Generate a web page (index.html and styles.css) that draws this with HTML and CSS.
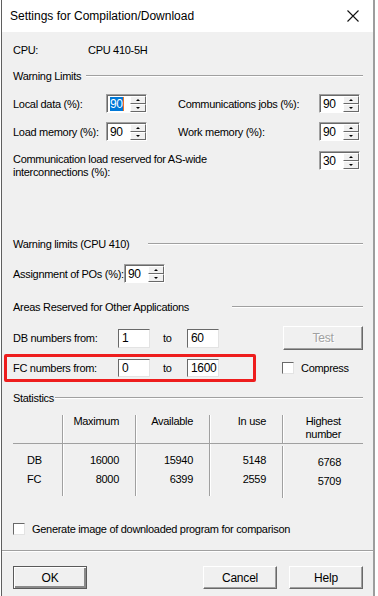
FILE: index.html
```html
<!DOCTYPE html>
<html lang="en">
<head>
  <meta charset="UTF-8" />
  <title>Settings for Compilation/Download</title>
  <link rel="stylesheet" href="styles.css">
</head>
<body>
  <div class="window">
    <div class="titlebar">
      <span class="title">Settings for Compilation/Download</span>
      <svg class="close" width="12" height="12" viewBox="0 0 12 12">
        <path d="M0.5 0.5 L11.5 11.5 M11.5 0.5 L0.5 11.5" stroke="#111" stroke-width="1.1" fill="none" />
      </svg>
    </div>

    <div class="content">
      <div class="cpu-row">
        <span class="cpu-label">CPU:</span>
        <span>CPU 410-5H</span>
      </div>

      <div class="group-title t-warning"><span>Warning Limits</span><i></i></div>

      <div class="row row-1">
        <span class="label">Local data (%):</span>
        <span class="spin"><span class="field"><span class="selected">90</span><b class="caret"></b></span><span class="arrows"><i class="up"></i><i class="down"></i></span></span>
        <span class="label label-right">Communications jobs (%):</span>
        <span class="spin"><span class="field">90</span><span class="arrows"><i class="up"></i><i class="down"></i></span></span>
      </div>

      <div class="row row-2">
        <span class="label">Load memory (%):</span>
        <span class="spin"><span class="field">90</span><span class="arrows"><i class="up"></i><i class="down"></i></span></span>
        <span class="label label-right">Work memory (%):</span>
        <span class="spin"><span class="field">90</span><span class="arrows"><i class="up"></i><i class="down"></i></span></span>
      </div>

      <div class="row row-3">
        <span class="label label-long">Communication load reserved for AS-wide<br />interconnections (%):</span>
        <span class="spin"><span class="field">30</span><span class="arrows"><i class="up"></i><i class="down"></i></span></span>
      </div>

      <div class="group-title t-cpu"><span>Warning limits (CPU 410)</span><i></i></div>

      <div class="row row-po">
        <span class="label label-po">Assignment of POs (%):</span>
        <span class="spin"><span class="field">90</span><span class="arrows"><i class="up"></i><i class="down"></i></span></span>
      </div>

      <div class="group-title t-areas"><span>Areas Reserved for Other Applications</span><i></i></div>

      <div class="range-row db-row">
        <span class="label label-range">DB numbers from:</span>
        <span class="box">1</span>
        <span class="to">to</span>
        <span class="box">60</span>
        <button class="btn btn-test" disabled>Test</button>
      </div>

      <div class="fc-line">
        <div class="range-row fc-row">
          <span class="label label-range">FC numbers from:</span>
          <span class="box box-fc">0</span>
          <span class="to">to</span>
          <span class="box box-fc">1600</span>
        </div>
        <label class="check check-compress"><span class="checkbox"></span>Compress</label>
      </div>

      <div class="group-title t-stats"><span>Statistics</span><i></i></div>

      <div class="stats">
        <div class="cell head"></div>
        <div class="cell head num sep">Maximum</div>
        <div class="cell head num sep">Available</div>
        <div class="cell head num sep">In use</div>
        <div class="cell head last sep"><span>Highest<br />number</span></div>

        <div class="cell name top">DB</div>
        <div class="cell num sep top">16000</div>
        <div class="cell num sep top">15940</div>
        <div class="cell num sep top">5148</div>
        <div class="cell last sep top low">6768</div>

        <div class="cell name bottom">FC</div>
        <div class="cell num sep bottom">8000</div>
        <div class="cell num sep bottom">6399</div>
        <div class="cell num sep bottom">2559</div>
        <div class="cell last sep bottom low">5709</div>
      </div>

      <label class="check check-image"><span class="checkbox"></span>Generate image of downloaded program for comparison</label>
    </div>

    <div class="footer">
      <button class="btn btn-default">OK</button>
      <span class="spacer"></span>
      <button class="btn">Cancel</button>
      <button class="btn">Help</button>
    </div>
  </div>
</body>
</html>
```

FILE: styles.css
```css
body {
  margin: 0;
  background: #fff;
  font-family: "Liberation Sans", Arial, sans-serif;
  font-size: 11px;
  letter-spacing: -0.3px;
  color: #000;
}

.window {
  margin-left: 1px;
  width: 371px;
  height: 596px;
  background: #f0f0f0;
  border-left: 1px solid #5f5f5f;
  border-right: 2px solid #9d9d9d;
}

.titlebar {
  height: 32px;
  background: #fff;
  display: flex;
  align-items: center;
  padding: 0 8px 0 8px;
}

.title {
  flex: 1;
  font-size: 12px;
  letter-spacing: 0;
  color: #000;
}

.close {
  margin-right: 6px;
  margin-top: -1px;
}

.content {
  padding: 0 10px 0 11px;
  white-space: nowrap;
}

.cpu-row {
  margin-top: 10px;
  height: 16px;
  line-height: 16px;
  display: flex;
}

.cpu-label {
  width: 75px;
}

.group-title {
  height: 16px;
  display: flex;
  align-items: center;
}

.group-title span {
  flex: none;
}

.group-title i {
  flex: 1;
  height: 1px;
  background: #a0a0a0;
  border-bottom: 1px solid #fff;
}

.t-warning { margin-top: 10px; }
.t-warning span { width: 73px; }
.t-cpu { margin-top: 55px; }
.t-cpu span { width: 135px; }
.t-areas { margin-top: 16px; }
.t-areas span { width: 219px; }
.t-stats { margin-top: 8px; }
.t-stats span { width: 42px; }

.row {
  display: flex;
  align-items: center;
  height: 19px;
}

.row-1 { margin-top: 10px; }
.row-2 { margin-top: 9px; }

.row-3 {
  margin-top: 10px;
  height: 30px;
  align-items: flex-start;
}

.row-po { margin-top: 12px; }

.label {
  width: 93px;
  flex: none;
}

.label-right {
  width: 141px;
  margin-left: 31px;
}

.label-long {
  width: 306px;
  line-height: 13px;
  padding-top: 2px;
}

.label-po {
  width: 111px;
}

.spin {
  display: flex;
  height: 19px;
  width: 41px;
  box-sizing: border-box;
  border: 1px solid;
  border-color: #a0a0a0 #fff #fff #a0a0a0;
}

.field {
  flex: 1;
  display: flex;
  align-items: center;
  padding-left: 2px;
  background: #fff;
  border-top: 1px solid #696969;
  border-left: 1px solid #696969;
  font-size: 12px;
}

.selected {
  background: #0078d7;
  color: #fff;
  line-height: 14px;
}

.caret {
  width: 1px;
  height: 14px;
  background: #f07020;
}

.arrows {
  width: 16px;
  display: flex;
  flex-direction: column;
  background: #fff;
  border-top: 1px solid #696969;
}

.arrows i {
  flex: 1;
  position: relative;
  background: #f0f0f0;
  border: 1px solid;
  border-color: #fff #696969 #696969 #fff;
}

.arrows i::after {
  content: "";
  position: absolute;
  left: 5px;
  top: 2px;
  border-left: 2px solid transparent;
  border-right: 2px solid transparent;
}

.arrows .up::after {
  border-bottom: 2px solid #000;
}

.arrows .down::after {
  border-top: 2px solid #000;
}

.range-row {
  display: flex;
  align-items: center;
}

.db-row {
  margin-top: 11px;
  height: 24px;
}

.label-range {
  width: 105px;
}

.box {
  width: 32px;
  height: 19px;
  box-sizing: border-box;
  padding-left: 3px;
  line-height: 17px;
  font-size: 12px;
  background: #fff;
  border: 1px solid;
  border-color: #696969 #e3e3e3 #e3e3e3 #696969;
}

.box-fc {
  height: 18px;
  line-height: 16px;
}

.to {
  width: 37px;
  padding-left: 13px;
  box-sizing: border-box;
}

.btn {
  font-family: "Liberation Sans", Arial, sans-serif;
  font-size: 12px;
  letter-spacing: -0.2px;
  color: #000;
  background: #f0f0f0;
  border: 1px solid;
  border-color: #fff #696969 #696969 #fff;
  box-shadow: inset -1px -1px 0 #a0a0a0;
  padding: 0;
}

.btn-test {
  margin-left: auto;
  width: 80px;
  height: 24px;
  color: #a0a0a0;
  text-shadow: 1px 1px 0 #fff;
}

.fc-line {
  margin-top: 4px;
  display: flex;
  align-items: center;
}

.fc-row {
  margin-left: -9px;
  width: 252px;
  height: 28px;
  box-sizing: border-box;
  padding-left: 6px;
  border: 3px solid #ee1d1d;
  border-radius: 2px;
}

.check {
  display: flex;
  align-items: center;
}

.checkbox {
  width: 12px;
  height: 12px;
  box-sizing: border-box;
  background: #fff;
  border: 1px solid;
  border-color: #696969 #e3e3e3 #e3e3e3 #696969;
  margin-right: 7px;
}

.check-compress {
  margin-left: 26px;
}

.stats {
  margin-top: 9px;
  display: grid;
  grid-template-columns: 49px 73px 74px 73px 81px;
}

.cell {
  line-height: 13px;
}

.head {
  height: 28px;
  border-bottom: 1px solid #a0a0a0;
}

.sep {
  border-left: 1px solid #a0a0a0;
  box-shadow: inset 1px 0 0 #fff;
}

.num {
  text-align: right;
  padding-right: 16px;
}

.last {
  text-align: right;
  padding-right: 22px;
}

.last span {
  display: inline-block;
  text-align: center;
}

.name {
  padding-left: 14px;
}

.top {
  padding-top: 10px;
  height: 22px;
  box-sizing: border-box;
}

.bottom {
  padding-top: 7px;
  height: 30px;
  box-sizing: border-box;
}

.low {
  position: relative;
  top: 2px;
}

.check-image {
  margin-top: 25px;
  height: 16px;
}

.footer {
  margin-top: 13px;
  border-top: 1px solid #a0a0a0;
  box-shadow: inset 0 1px 0 #fff;
  padding: 15px 10px 0 11px;
  display: flex;
  gap: 12px;
}

.footer .btn {
  width: 74px;
  height: 23px;
}

.footer .btn-default {
  border: 1px solid #5a5a5a;
  box-shadow: inset 1px 1px 0 #fff, inset -2px -2px 0 #8a8a8a;
}

.spacer {
  flex: 1;
}
```
